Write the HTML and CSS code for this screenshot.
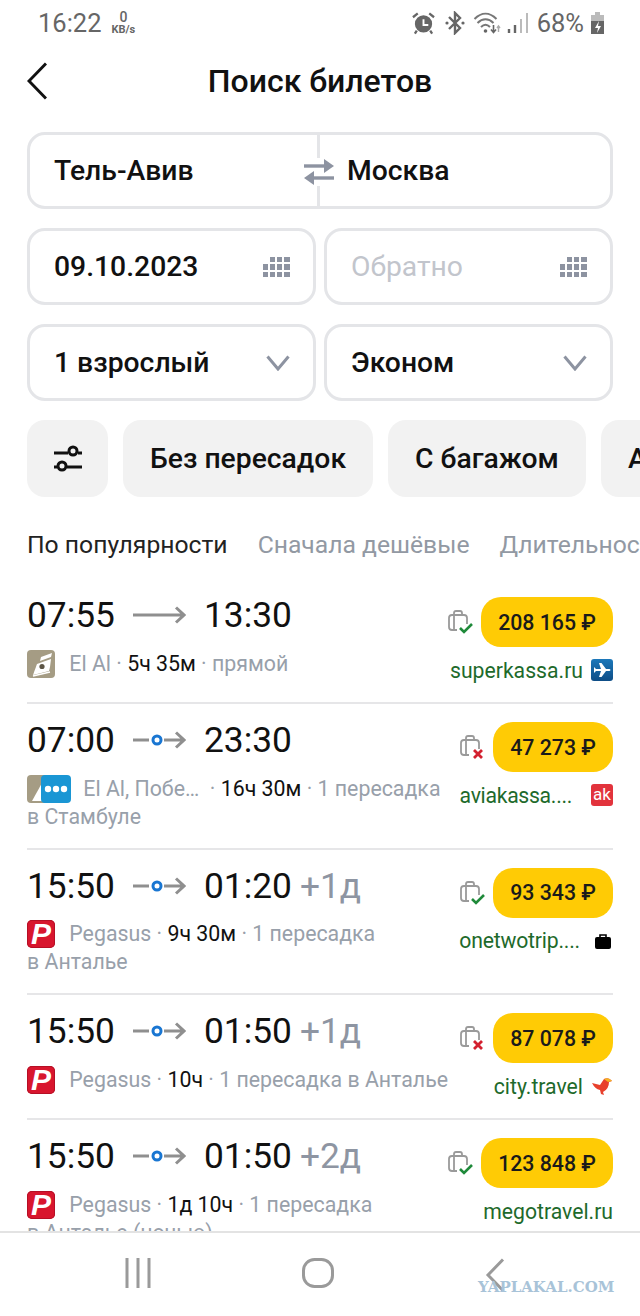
FILE: index.html
```html
<!DOCTYPE html>
<html lang="ru">
<head>
<meta charset="utf-8">
<title>Поиск билетов</title>
<link rel="stylesheet" href="styles.css">
</head>
<body>
<div class="screen">
  <div class="status">
    <div class="status-left">
      <span class="clock">16:22</span>
      <span class="speed"><b>0</b><i>KB/s</i></span>
    </div>
    <div class="status-right">
      <svg class="st-alarm" viewBox="0 0 24 24"><circle cx="12" cy="13" r="9" fill="#666"/><path d="M12 8v6h5" fill="none" stroke="#fff" stroke-width="2"/><path d="M1 6l5-4M23 6l-5-4M5 20l-2 3M19 20l2 3" stroke="#666" stroke-width="2.4" fill="none"/></svg>
      <svg class="st-bt" viewBox="0 0 20 24"><path d="M4 6l11 11-5 5V2l5 5L4 18" fill="none" stroke="#666" stroke-width="2.4"/><circle cx="2" cy="12" r="1.6" fill="#666"/><circle cx="18" cy="12" r="1.6" fill="#666"/></svg>
      <svg class="st-wifi" viewBox="0 0 28 24"><path d="M1 8c7-7 15-7 22 0M4 12c5-5 11-5 16 0M7.500 16c3-3 6-3 9 0" fill="none" stroke="#777" stroke-width="2"/><circle cx="12" cy="20" r="1.800" fill="#666"/><path d="M20 14v7M17.500 18.500l2.500 3 2.500-3" fill="none" stroke="#666" stroke-width="1.600"/><path d="M25 21v-6M23.500 17l1.500-2 1.500 2" fill="none" stroke="#aaa" stroke-width="1.400"/></svg>
      <svg class="st-signal" viewBox="0 0 22 24"><path d="M2 22v-4M8 22v-8" stroke="#666" stroke-width="2.400"/><path d="M14 22V8M20 22V2" stroke="#bbb" stroke-width="2"/></svg>
      <span class="battery-text">68%</span>
      <svg class="st-batt" viewBox="0 0 15 24"><path d="M5 1h5v3H5z" fill="#bbb"/><path d="M1 4h13v6H1z" fill="#bbb"/><path d="M1 10h13v13H1z" fill="#666"/><path d="M9 10l-4 7h3l-1 5 4-7H8z" fill="#fff"/></svg>
    </div>
  </div>

  <header class="topbar">
    <svg class="back" viewBox="0 0 20 38"><path d="M19 1.500L2 19l17 17.500" fill="none" stroke="#111" stroke-width="3"/></svg>
    <h1 class="title">Поиск билетов</h1>
  </header>

  <section class="form">
    <div class="field route">
      <span class="route-side">Тель-Авив</span>
      <span class="route-side route-to">Москва</span>
      <svg class="swap" viewBox="0 0 30 28"><path d="M0 8h22" fill="none" stroke="#8d93a1" stroke-width="3.400"/><path d="M20 1l10 7-10 7z" fill="#8d93a1"/><path d="M30 20H8" fill="none" stroke="#8d93a1" stroke-width="3.400"/><path d="M10 13L0 20l10 7z" fill="#8d93a1"/></svg>
    </div>
    <div class="pair">
      <div class="field"><span>09.10.2023</span>
        <svg class="cal" viewBox="0 0 27 20"><path d="M7 0h5v5H7zM14 0h5v5h-5zM21 0h6v5h-6zM0 7h5v6H0zM7 7h5v6H7zM14 7h5v6h-5zM21 7h6v6h-6zM0 15h5v5H0zM7 15h5v5H7zM14 15h5v5h-5zM21 15h6v5h-6z" fill="#8d93a1"/></svg>
      </div>
      <div class="field"><span class="placeholder">Обратно</span>
        <svg class="cal" viewBox="0 0 27 20"><path d="M7 0h5v5H7zM14 0h5v5h-5zM21 0h6v5h-6zM0 7h5v6H0zM7 7h5v6H7zM14 7h5v6h-5zM21 7h6v6h-6zM0 15h5v5H0zM7 15h5v5H7zM14 15h5v5h-5zM21 15h6v5h-6z" fill="#8d93a1"/></svg>
      </div>
    </div>
    <div class="pair">
      <div class="field"><span>1 взрослый</span>
        <svg class="chev" viewBox="0 0 24 16"><path d="M1.500 1.500L12 14 22.500 1.500" fill="none" stroke="#8d93a1" stroke-width="3"/></svg>
      </div>
      <div class="field"><span>Эконом</span>
        <svg class="chev" viewBox="0 0 24 16"><path d="M1.500 1.500L12 14 22.500 1.500" fill="none" stroke="#8d93a1" stroke-width="3"/></svg>
      </div>
    </div>
  </section>

  <nav class="chips">
    <div class="chip chip-icon">
      <svg class="sliders" viewBox="0 0 30 28"><path d="M1 8h14M25 8h4M1 22h3M14 22h15" stroke="#111" stroke-width="3" fill="none"/><circle cx="20" cy="6" r="4" fill="none" stroke="#111" stroke-width="3"/><circle cx="9" cy="21" r="4" fill="none" stroke="#111" stroke-width="3"/></svg>
    </div>
    <div class="chip">Без пересадок</div>
    <div class="chip">С багажом</div>
    <div class="chip">Аэрофлот</div>
  </nav>

  <div class="tabs">
    <span class="tab tab-active">По популярности</span>
    <span class="tab">Сначала дешёвые</span>
    <span class="tab">Длительность</span>
  </div>

  <main class="list">
    <article class="ticket">
      <div class="ticket-main">
        <div class="times">
          <span class="time">07:55</span>
          <svg class="arrow" viewBox="0 0 53 18"><path d="M0 9h51M43 1.500L51 9l-8 7.500" fill="none" stroke="#8f8f8f" stroke-width="3"/></svg>
          <span class="time">13:30</span>
        </div>
        <p class="meta">
          <svg class="logo" viewBox="0 0 28 28"><rect width="28" height="28" rx="4" fill="#a59c84"/><path d="M14 7L25 3l-1 4-11 4z" fill="#fff"/><path d="M10 14L24 9l-1 8-1 4-16 4z" fill="#fff"/><path d="M6 26l17-4" stroke="#fff" stroke-width="1.500"/><circle cx="15" cy="16.500" r="2.600" fill="#5d5646"/></svg>
          <span class="airline">El Al</span> · <b>5ч 35м</b> · прямой
        </p>
      </div>
      <div class="ticket-side">
        <div class="offer">
          <svg class="bag" viewBox="0 0 26 24"><path d="M7 5V3q0-2 2-2h4q2 0 2 2v2M5 5h12q3 0 3 3v6M10 20H5q-3 0-3-3V8q0-3 3-3M7 5v15" fill="none" stroke="#9a9a9a" stroke-width="1.800"/><path d="M13 18l4 4 8-8" fill="none" stroke="#1f8a3a" stroke-width="2.600"/></svg>
          <span class="price">208 165 ₽</span>
        </div>
        <div class="seller"><span>superkassa.ru</span>
          <svg class="seller-icon" viewBox="0 0 22 22"><defs><linearGradient id="skGrad" x1="0" y1="0" x2="0" y2="1"><stop offset="0" stop-color="#1c78ba"/><stop offset="1" stop-color="#0e4d86"/></linearGradient></defs><rect width="22" height="22" rx="3" fill="url(#skGrad)"/><path d="M3 8L5 10H10L8 4H10.500L15 10H18.500Q20.500 11 18.500 12H15L10.500 18H8L10 12H5L3 14Z" fill="#fff"/></svg>
        </div>
      </div>
    </article>

    <article class="ticket">
      <div class="ticket-main">
        <div class="times">
          <span class="time">07:00</span>
          <svg class="arrow" viewBox="0 0 53 18"><path d="M0 9h16M31 9h20M43 1.500L51 9l-8 7.500" fill="none" stroke="#8f8f8f" stroke-width="3"/><circle cx="24" cy="9" r="4" fill="#fff" stroke="#1976d2" stroke-width="3"/></svg>
          <span class="time">23:30</span>
        </div>
        <p class="meta">
          <span class="logo-pair">
            <svg class="logo" viewBox="0 0 28 28"><rect width="28" height="28" rx="4" fill="#a59c84"/><path d="M5 26L15 8v18z" fill="#fff"/></svg>
            <svg class="logo-more" viewBox="0 0 30 28"><rect width="30" height="28" rx="4" fill="#1a96d4"/><circle cx="7" cy="14" r="3.200" fill="#fff"/><circle cx="15" cy="14" r="3.200" fill="#fff"/><circle cx="23" cy="14" r="3.200" fill="#fff"/></svg>
          </span>
          <span class="airline">El Al, Побе…</span> &nbsp;· <b>16ч 30м</b> · 1 пересадка<br>в Стамбуле
        </p>
      </div>
      <div class="ticket-side">
        <div class="offer">
          <svg class="bag" viewBox="0 0 26 24"><path d="M7 5V3q0-2 2-2h4q2 0 2 2v2M5 5h12q3 0 3 3v6M10 20H5q-3 0-3-3V8q0-3 3-3M7 5v15" fill="none" stroke="#9a9a9a" stroke-width="1.800"/><path d="M15 15l8 8M23 15l-8 8" fill="none" stroke="#d3202f" stroke-width="2.800"/></svg>
          <span class="price">47 273 ₽</span>
        </div>
        <div class="seller"><span class="seller-name">aviakassa....</span>
          <span class="seller-badge">ak</span>
        </div>
      </div>
    </article>

    <article class="ticket">
      <div class="ticket-main">
        <div class="times">
          <span class="time">15:50</span>
          <svg class="arrow" viewBox="0 0 53 18"><path d="M0 9h16M31 9h20M43 1.500L51 9l-8 7.500" fill="none" stroke="#8f8f8f" stroke-width="3"/><circle cx="24" cy="9" r="4" fill="#fff" stroke="#1976d2" stroke-width="3"/></svg>
          <span class="time">01:20</span>
          <span class="plus">+1д</span>
        </div>
        <p class="meta">
          <span class="logo-p">P</span>
          <span class="airline">Pegasus</span> · <b>9ч 30м</b> · 1 пересадка<br>в Анталье
        </p>
      </div>
      <div class="ticket-side">
        <div class="offer">
          <svg class="bag" viewBox="0 0 26 24"><path d="M7 5V3q0-2 2-2h4q2 0 2 2v2M5 5h12q3 0 3 3v6M10 20H5q-3 0-3-3V8q0-3 3-3M7 5v15" fill="none" stroke="#9a9a9a" stroke-width="1.800"/><path d="M13 18l4 4 8-8" fill="none" stroke="#1f8a3a" stroke-width="2.600"/></svg>
          <span class="price">93 343 ₽</span>
        </div>
        <div class="seller"><span class="seller-name-alt">onetwotrip....</span>
          <svg class="seller-bag" viewBox="0 0 16 16"><path d="M5 4V2h6v2" fill="none" stroke="#000" stroke-width="1.600"/><rect y="4" width="16" height="12" rx="2" fill="#000"/></svg>
        </div>
      </div>
    </article>

    <article class="ticket">
      <div class="ticket-main">
        <div class="times">
          <span class="time">15:50</span>
          <svg class="arrow" viewBox="0 0 53 18"><path d="M0 9h16M31 9h20M43 1.500L51 9l-8 7.500" fill="none" stroke="#8f8f8f" stroke-width="3"/><circle cx="24" cy="9" r="4" fill="#fff" stroke="#1976d2" stroke-width="3"/></svg>
          <span class="time">01:50</span>
          <span class="plus">+1д</span>
        </div>
        <p class="meta">
          <span class="logo-p">P</span>
          <span class="airline">Pegasus</span> · <b>10ч</b> · 1 пересадка в Анталье
        </p>
      </div>
      <div class="ticket-side">
        <div class="offer">
          <svg class="bag" viewBox="0 0 26 24"><path d="M7 5V3q0-2 2-2h4q2 0 2 2v2M5 5h12q3 0 3 3v6M10 20H5q-3 0-3-3V8q0-3 3-3M7 5v15" fill="none" stroke="#9a9a9a" stroke-width="1.800"/><path d="M15 15l8 8M23 15l-8 8" fill="none" stroke="#d3202f" stroke-width="2.800"/></svg>
          <span class="price">87 078 ₽</span>
        </div>
        <div class="seller"><span>city.travel</span>
          <svg class="seller-icon" viewBox="0 0 22 22"><path d="M1 8l8 2 4-6q4-2 7 1l1 1-3 1q0 7-6 10l1 3-3-1-1-4Q4 14 1 8z" fill="#e8402c"/><path d="M13 4q4-2 7 1l1 1-4 1z" fill="#f4b324"/></svg>
        </div>
      </div>
    </article>

    <article class="ticket ticket-last">
      <div class="ticket-main">
        <div class="times">
          <span class="time">15:50</span>
          <svg class="arrow" viewBox="0 0 53 18"><path d="M0 9h16M31 9h20M43 1.500L51 9l-8 7.500" fill="none" stroke="#8f8f8f" stroke-width="3"/><circle cx="24" cy="9" r="4" fill="#fff" stroke="#1976d2" stroke-width="3"/></svg>
          <span class="time">01:50</span>
          <span class="plus">+2д</span>
        </div>
        <p class="meta">
          <span class="logo-p">P</span>
          <span class="airline">Pegasus</span> · <b>1д 10ч</b> · 1 пересадка<br>в Анталье (ночью)
        </p>
      </div>
      <div class="ticket-side">
        <div class="offer">
          <svg class="bag" viewBox="0 0 26 24"><path d="M7 5V3q0-2 2-2h4q2 0 2 2v2M5 5h12q3 0 3 3v6M10 20H5q-3 0-3-3V8q0-3 3-3M7 5v15" fill="none" stroke="#9a9a9a" stroke-width="1.800"/><path d="M13 18l4 4 8-8" fill="none" stroke="#1f8a3a" stroke-width="2.600"/></svg>
          <span class="price">123 848 ₽</span>
        </div>
        <div class="seller"><span>megotravel.ru</span></div>
      </div>
    </article>
  </main>

  <footer class="navbar">
    <svg class="nav-recent" viewBox="0 0 26 30"><path d="M2 0v30M13 0v30M24 0v30" stroke="#9a9a9a" stroke-width="3"/></svg>
    <svg class="nav-home" viewBox="0 0 32 30"><rect x="1.500" y="1.500" width="29" height="27" rx="11" fill="none" stroke="#9a9a9a" stroke-width="3"/></svg>
    <svg class="nav-back" viewBox="0 0 20 34"><path d="M18 1.500L3 17l15 15.500" fill="none" stroke="#9a9a9a" stroke-width="3"/></svg>
  </footer>
  <span class="watermark">YAPLAKAL.COM</span>
</div>
</body>
</html>
```
FILE: styles.css
```css
* { box-sizing: border-box; }
html, body { margin: 0; padding: 0; background: #fff; }
body { font-family: Roboto, "Noto Sans", sans-serif; color: #111; }
.screen { position: relative; width: 640px; height: 1316px; overflow: hidden; display: flex; flex-direction: column; background: #fff; }

.status { height: 46px; flex: none; display: flex; justify-content: space-between; align-items: center; padding: 0 35px 0 38px; color: #666; }
.status-left, .status-right { display: flex; align-items: center; }
.clock { font-size: 25.500px; }
.speed { display: flex; flex-direction: column; align-items: center; margin-left: 10px; }
.speed b { font-size: 14px; line-height: 13px; font-weight: 500; }
.speed i { font-size: 11px; line-height: 11px; font-style: normal; font-weight: 700; }
.st-alarm { width: 23px; height: 24px; }
.st-bt { width: 20px; height: 24px; margin-left: 10px; }
.st-wifi { width: 29px; height: 24px; margin-left: 8px; }
.st-signal { width: 22px; height: 24px; margin-left: 5px; }
.battery-text { font-size: 25.500px; margin-left: 8px; }
.st-batt { width: 15px; height: 24px; margin-left: 6px; }

.topbar { flex: none; height: 70px; position: relative; display: flex; align-items: center; justify-content: center; }
.back { position: absolute; left: 27px; top: 16px; width: 20px; height: 38px; }
.title { margin: 0; font-size: 32px; font-weight: 500; }

.form { flex: none; margin: 16px 27px 0; display: flex; flex-direction: column; gap: 19px; }
.pair { display: grid; grid-template-columns: 1fr 1fr; gap: 8px; }
.field { position: relative; height: 77px; border: 3px solid #e4e5e8; border-radius: 18px; display: flex; align-items: center; justify-content: space-between; padding: 0 23px 0 24px; font-size: 28.300px; font-weight: 500; }
.route { padding: 0; display: grid; grid-template-columns: 287px 1fr; }
.route-side { padding-left: 24px; }
.route-to { border-left: 3px solid #e4e5e8; height: 100%; display: flex; align-items: center; padding-left: 27px; }
.swap { position: absolute; left: 274px; top: 23px; width: 30px; height: 28px; background: #fff; }
.placeholder { color: #c2c5cc; font-weight: 400; }
.cal { width: 27px; height: 20px; }
.chev { width: 24px; height: 16px; }

.chips { flex: none; margin: 19px 0 0 27px; display: flex; gap: 15px; width: 760px; }
.chip { flex: none; height: 77px; border-radius: 18px; background: #f2f2f2; padding: 0 27px; display: flex; align-items: center; font-size: 28.300px; font-weight: 500; white-space: nowrap; }
.chip-icon { width: 81px; justify-content: center; padding: 0; }
.sliders { width: 30px; height: 28px; }

.tabs { flex: none; margin: 32px 0 0 27px; display: flex; gap: 30px; width: 760px; font-size: 24.700px; height: 30px; align-items: center; }
.tab { color: #9299a3; white-space: nowrap; }
.tab-active { color: #222; }

.list { flex: 1; min-height: 0; overflow: hidden; margin-top: 20px; }
.ticket { margin-left: 27px; margin-right: 27px; border-bottom: 2px solid #e6e6e8; display: flex; justify-content: space-between; padding-top: 18px; }
.ticket-last { border-bottom: 0; }
.ticket-main { min-width: 0; flex: 1; }
.times { display: flex; align-items: center; height: 36px; font-size: 35.300px; white-space: nowrap; }
.time { width: 88px; }
.arrow { width: 53px; height: 18px; margin: 0 18px 0 18px; flex: none; }
.plus { color: #8e95a2; margin-left: 8px; }
.meta { margin: 16.500px 0 0; padding-bottom: 17px; font-size: 21.330px; line-height: 28px; color: #98a0aa; white-space: nowrap; }
.meta b { font-weight: 400; color: #111; }
.airline { margin-left: 9px; }
.logo { width: 28px; height: 28px; vertical-align: top; display: inline-block; }
.logo-pair { display: inline-block; position: relative; width: 44px; height: 28px; vertical-align: top; margin-right: -2px; }
.logo-more { position: absolute; left: 14px; top: 0; width: 30px; height: 28px; }
.logo-p { display: inline-block; width: 28px; height: 28px; vertical-align: top; border-radius: 5px; background: #d8162e; box-shadow: inset 0 0 0 1px #b50f25; color: #fff; font-family: "Liberation Sans", sans-serif; font-size: 30px; line-height: 28px; font-weight: 700; font-style: italic; text-align: center; }

.ticket-side { flex: none; display: flex; flex-direction: column; align-items: flex-end; padding-bottom: 20px; }
.offer { display: flex; align-items: center; gap: 8px; }
.bag { width: 26px; height: 24px; }
.price { height: 50px; border-radius: 20px; background: #ffcb05; padding: 0 17px; display: flex; align-items: center; font-size: 21.300px; font-weight: 500; color: #1a1a1a; white-space: nowrap; }
.seller { margin-top: 11px; height: 24px; display: flex; align-items: center; gap: 8px; color: #1e6a2b; font-size: 21.200px; }
.seller-icon { width: 22px; height: 22px; }
.seller-name { margin-right: 11px; letter-spacing: -0.300px; }
.seller-name-alt { margin-right: 7px; letter-spacing: -0.200px; }
.seller-badge { width: 22px; height: 22px; border-radius: 3px; background: #e2333c; color: #fff; font-size: 17px; line-height: 20px; text-align: center; }
.seller-bag { width: 16px; height: 16px; margin-right: 2px; }

.navbar { flex: none; height: 85px; border-top: 2px solid #e3e3e3; background: #fff; display: flex; align-items: flex-start; position: relative; z-index: 1; padding-top: 25px; }
.nav-recent { width: 26px; height: 30px; margin-left: 125px; }
.nav-home { width: 32px; height: 30px; margin-left: 151px; }
.nav-back { width: 20px; height: 34px; margin-left: 151px; }
.watermark { position: absolute; z-index: 2; left: 478px; top: 1278px; font-family: "DejaVu Serif", serif; font-weight: 700; font-size: 15px; color: #a8c3d8; white-space: nowrap; }
```
